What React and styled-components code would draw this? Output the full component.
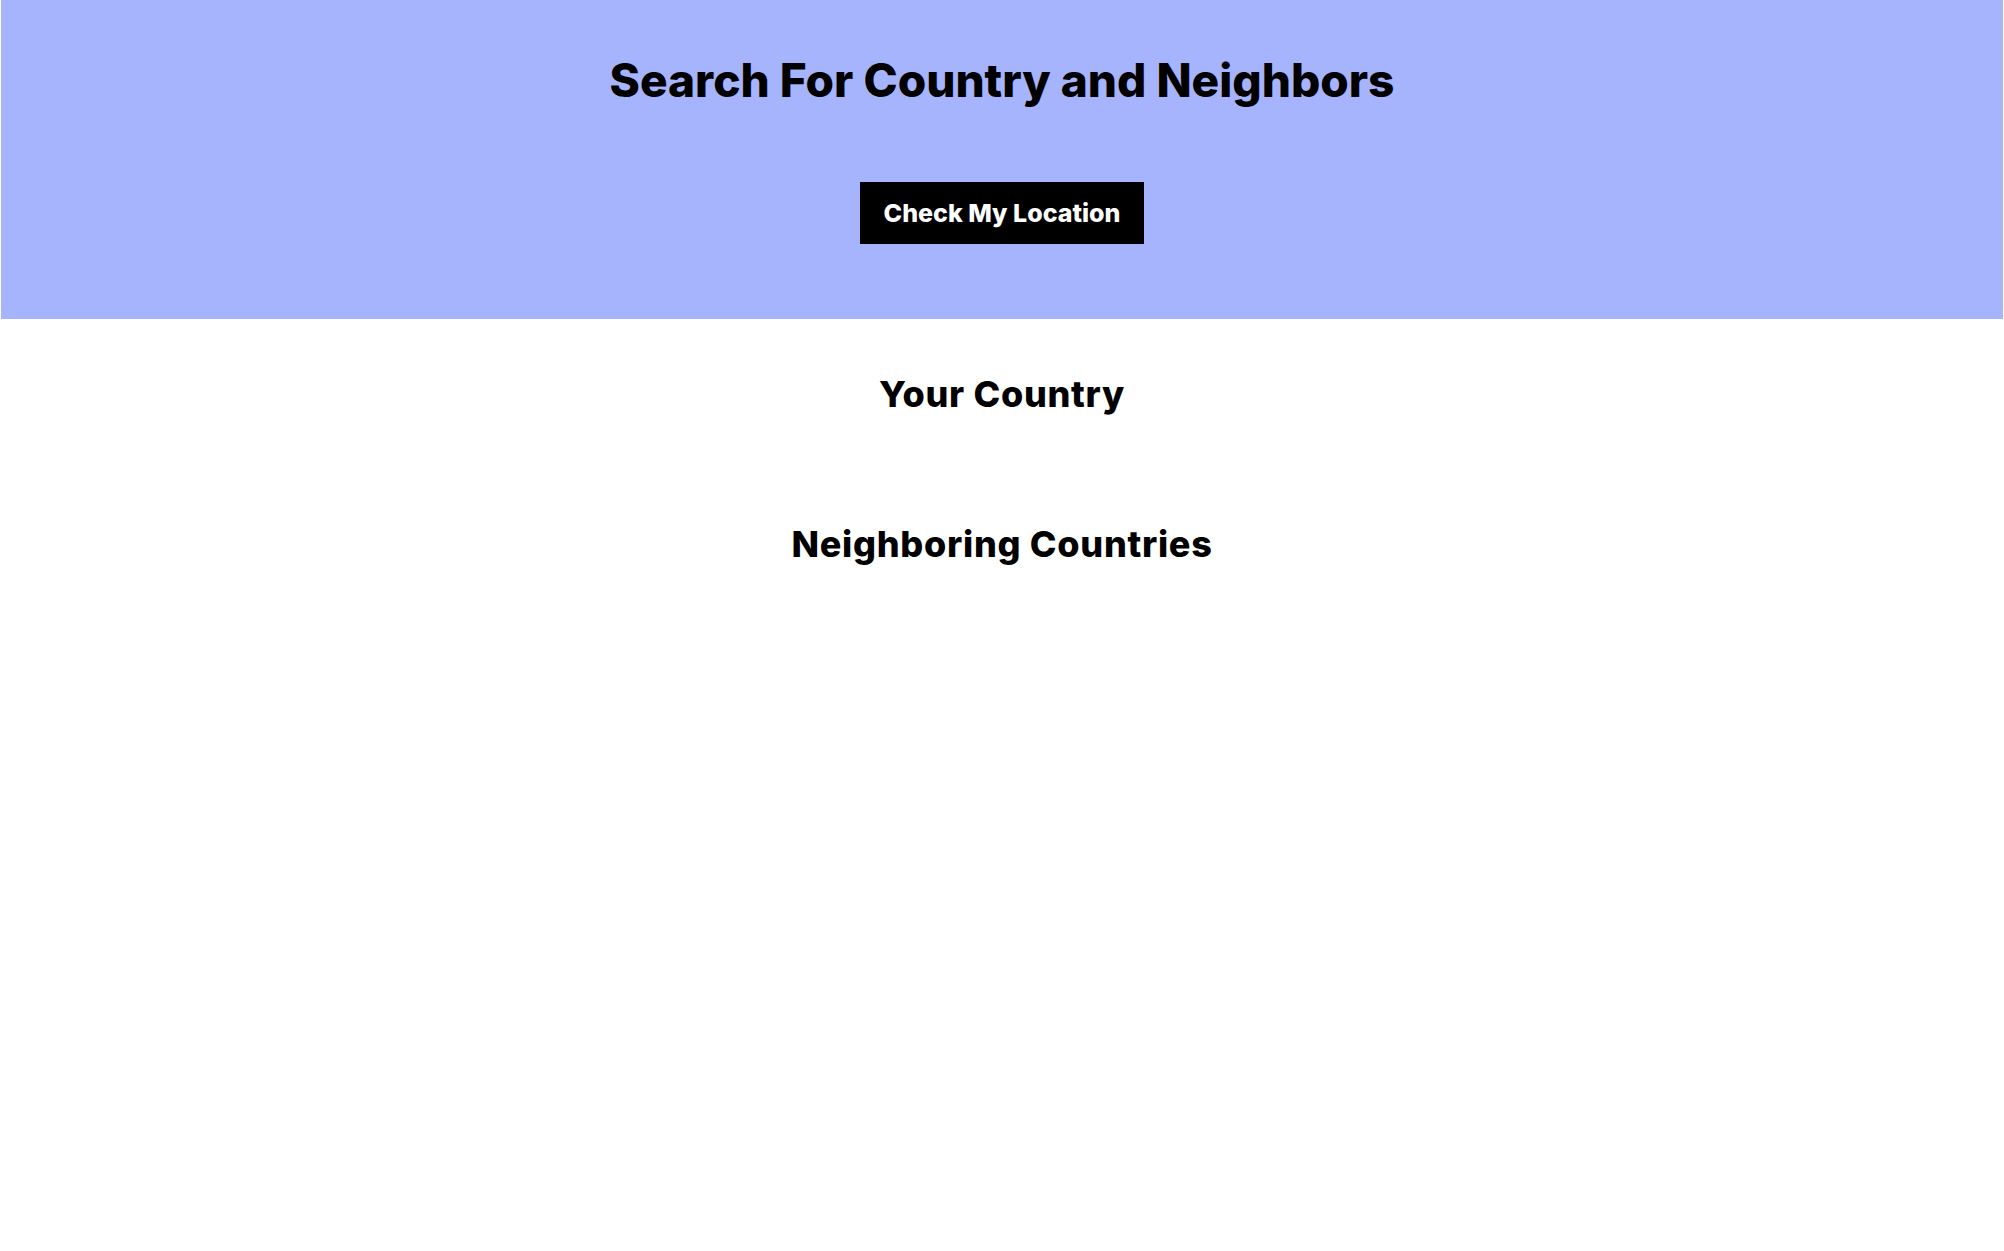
import React from "react";
import styled, { createGlobalStyle } from "styled-components";

const GlobalStyle = createGlobalStyle`
  body {
    margin: 0;
    background: #ffffff;
    font-family: Inter, "Noto Sans", sans-serif;
    color: #000000;
  }
`;

const Header = styled.header`
  display: flex;
  flex-direction: column;
  align-items: center;
  background-color: #a5b4fc;
  padding: 52px 0 75px;
  margin: 0 1px;
`;

const Title = styled.h1`
  margin: 0;
  font-size: 46px;
  font-weight: 800;
`;

const LocationButton = styled.button`
  margin-top: 74px;
  height: 62px;
  padding: 0 24px;
  border: none;
  background-color: #000000;
  color: #ffffff;
  font-family: Inter, "Noto Sans", sans-serif;
  font-size: 25px;
  font-weight: 800;
  cursor: pointer;
`;

const Section = styled.section`
  display: flex;
  flex-direction: column;
  align-items: center;
  padding-top: ${(p) => p.$top}px;
`;

const SectionTitle = styled.h2`
  margin: 0;
  font-size: 36px;
  font-weight: 800;
  letter-spacing: 0.02em;
`;

const App = () => (
  <>
    <GlobalStyle />
    <Header>
      <Title>Search For Country and Neighbors</Title>
      <LocationButton>Check My Location</LocationButton>
    </Header>
    <Section $top={53}>
      <SectionTitle>Your Country</SectionTitle>
    </Section>
    <Section $top={106}>
      <SectionTitle>Neighboring Countries</SectionTitle>
    </Section>
  </>
);

export default App;
